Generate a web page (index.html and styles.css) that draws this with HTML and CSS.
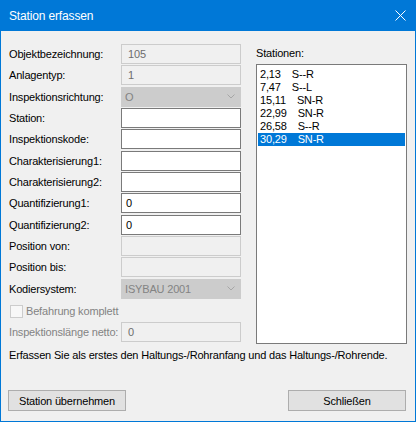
FILE: index.html
```html
<!DOCTYPE html>
<html lang="de">
<head>
<meta charset="utf-8">
<title>Station erfassen</title>
<link rel="stylesheet" href="styles.css">
</head>
<body>
<div class="window">
  <div class="titlebar">
    <span class="title">Station erfassen</span>
    <svg class="close" width="11" height="11" viewBox="0 0 11 11"><path d="M0.5 0.5 L10.5 10.5 M10.5 0.5 L0.5 10.5" stroke="#ffffff" stroke-width="1" fill="none"/></svg>
  </div>
  <div class="content">
    <div class="main">
      <div class="form">
        <div class="row"><span class="label">Objektbezeichnung:</span><div class="field disabled">105</div></div>
        <div class="row"><span class="label">Anlagentyp:</span><div class="field disabled">1</div></div>
        <div class="row"><span class="label">Inspektionsrichtung:</span><div class="field combo">O<svg class="chev" width="8" height="5" viewBox="0 0 8 5"><path d="M0.5 0.5 L4 4 L7.5 0.5" stroke="#a6a6a6" fill="none"/></svg></div></div>
        <div class="row"><span class="label">Station:</span><div class="field"></div></div>
        <div class="row"><span class="label">Inspektionskode:</span><div class="field"></div></div>
        <div class="row"><span class="label">Charakterisierung1:</span><div class="field"></div></div>
        <div class="row"><span class="label">Charakterisierung2:</span><div class="field"></div></div>
        <div class="row"><span class="label">Quantifizierung1:</span><div class="field">0</div></div>
        <div class="row"><span class="label">Quantifizierung2:</span><div class="field">0</div></div>
        <div class="row"><span class="label">Position von:</span><div class="field disabled"></div></div>
        <div class="row"><span class="label">Position bis:</span><div class="field disabled"></div></div>
        <div class="row"><span class="label">Kodiersystem:</span><div class="field combo">ISYBAU 2001<svg class="chev" width="8" height="5" viewBox="0 0 8 5"><path d="M0.5 0.5 L4 4 L7.5 0.5" stroke="#a6a6a6" fill="none"/></svg></div></div>
        <div class="check-row"><span class="checkbox"></span><span class="label muted">Befahrung komplett</span></div>
        <div class="row"><span class="label muted">Inspektionslänge netto:</span><div class="field disabled">0</div></div>
      </div>
      <div class="side">
        <div class="side-label">Stationen:</div>
        <div class="listbox">
          <div class="item"><span class="num">2,13</span>S--R</div>
          <div class="item"><span class="num">7,47</span>S--L</div>
          <div class="item"><span class="num">15,11</span>SN-R</div>
          <div class="item"><span class="num">22,99</span>SN-R</div>
          <div class="item"><span class="num">26,58</span>S--R</div>
          <div class="item selected"><span class="num">30,29</span>SN-R</div>
        </div>
      </div>
    </div>
    <p class="message">Erfassen Sie als erstes den Haltungs-/Rohranfang und das Haltungs-/Rohrende.</p>
    <div class="buttons">
      <button class="btn">Station übernehmen</button>
      <button class="btn">Schließen</button>
    </div>
  </div>
</div>
</body>
</html>
```

FILE: styles.css
```css
* { box-sizing: border-box; }
html, body { margin: 0; padding: 0; }
body {
  width: 416px;
  height: 422px;
  font-family: "Liberation Sans", Arial, sans-serif;
  font-size: 11px;
  letter-spacing: -0.17px;
  color: #000;
  background: #f0f0f0;
}
.window {
  width: 416px;
  height: 422px;
  border: 1px solid #0078d7;
  border-top: 0;
  display: flex;
  flex-direction: column;
  background: #f0f0f0;
}
.titlebar {
  height: 31px;
  margin: 0 -1px;
  background: #0078d7;
  color: #fff;
  display: flex;
  align-items: center;
  justify-content: space-between;
  padding: 0 10px 0 9px;
}
.title { font-size: 12px; line-height: 16px; letter-spacing: -0.15px; }
.close { display: block; margin-top: -1px; }
.content {
  flex: 1;
  display: flex;
  flex-direction: column;
  padding: 13px 7px 10px 8px;
}
.main { display: flex; gap: 15px; }
.form { width: 232px; display: flex; flex-direction: column; }
.row {
  height: 21.35px;
  display: flex;
  align-items: flex-start;
  justify-content: space-between;
}
.label {
  line-height: 20px;
  white-space: nowrap;
}
.muted { color: #838383; }
.field {
  width: 120px;
  height: 20px;
  flex: none;
  background: #fff;
  border: 1px solid #7a7a7a;
  line-height: 18px;
  padding: 0 4px;
  color: #000;
}
.field.disabled {
  background: #f0f0f0;
  border-color: #cccccc;
  color: #6d6d6d;
  padding-left: 6px;
}
.field.combo {
  background: #cccccc;
  border-color: #cccccc;
  color: #838383;
  display: flex;
  align-items: center;
  justify-content: space-between;
  padding: 0 5px 0 3px;
}
.chev { display: block; }
.check-row {
  height: 22px;
  display: flex;
  align-items: center;
  gap: 3px;
  padding-left: 1px;
}
.checkbox {
  width: 13px;
  height: 13px;
  border: 1px solid #cccccc;
  background: #f7f7f7;
}
.side { width: 151px; display: flex; flex-direction: column; }
.side-label { line-height: 18px; height: 18px; margin-bottom: 2px; }
.listbox {
  height: 280px;
  background: #fff;
  border: 1px solid #7a7a7a;
  padding: 3px 1px 1px 1px;
}
.item {
  height: 13px;
  line-height: 13px;
  padding-left: 2px;
  white-space: nowrap;
}
.num { margin-right: 11px; }
.item.selected { background: #0078d7; color: #fff; }
.message {
  margin: 3px 0 0 0;
  line-height: 16px;
  white-space: nowrap;
}
.buttons {
  margin-top: auto;
  display: flex;
  justify-content: space-between;
  margin-left: -1px;
  margin-right: 2px;
}
.btn {
  width: 118px;
  height: 21px;
  font-family: inherit;
  font-size: 11px;
  letter-spacing: -0.17px;
  white-space: nowrap;
  color: #000;
  background: #e1e1e1;
  border: 1px solid #adadad;
  padding: 0;
  line-height: 18px;
}
```
